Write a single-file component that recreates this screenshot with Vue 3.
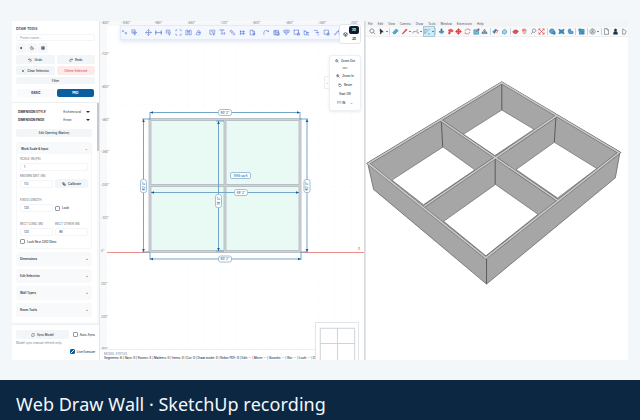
<script setup>
import { ref } from 'vue'

const project = ref('')
const tier = ref('pro')
const autoSync = ref(false)
const liveExecute = ref(true)
const lockLength = ref(false)
const lockRect = ref(false)

const sections = ['Dimensions', 'Edit Selection', 'Wall Types', 'Room Tools']

const glyphs = {
  back: 'M15 6v12l-8-6z',
  moon: 'M12 3a9 9 0 1 0 9 9a7 7 0 0 1-9-9z',
  grid: 'M4 4h16v16H4zM4 10h16M4 15h16M12 4v16',
  undo: 'M8 3L3 8l5 5M3 8h11a6 6 0 0 1 0 12h-4',
  redo: 'M16 3l5 5-5 5M21 8H10a6 6 0 0 0 0 12h4',
  close: 'M5 5l14 14M19 5L5 19',
  link: 'M4 4h8v8H4zM12 12h8v8h-8zM8 12v4h4',
  sync: 'M4 11a8 8 0 0 1 14-5l2 2V3M20 13a8 8 0 0 1-14 5l-2-2v5',
  zoom: 'M10 3a7 7 0 1 0 .1 0zM15 15l6 6M7 10h6',
  zoomIn: 'M10 3a7 7 0 1 0 .1 0zM15 15l6 6M7 10h6M10 7v6',
  reset: 'M5 4v6h6M5 10a8 8 0 1 1-1 6'
}

const tools = [
  [
    'M3 4l7 7M10 4l-7 7M13 14h8M17 10v9',
    'M3 3h11v11H3zM8 9l12 3-5 3-2 6z'
  ],
  [
    'M12 2v20M2 12h20M8 6l4-4 4 4M8 18l4 4 4-4M6 8l-4 4 4 4M18 8l4 4-4 4',
    'M2 12h20M6 8l-4 4 4 4M18 8l4 4-4 4M2 4v16M22 4v16',
    'M4 4h13v6M4 4v10h5M11 12l9 2-4 3-1 5zM8 8h5',
    'M3 8V3h5M16 3h5v5M21 16v5h-5M8 21H3v-5',
    'M3 4h7v16H3zM14 4h7v16h-7zM7 9h10',
    'M3 18L11 4l9 7-4 9H5zM9 12h8M14 9v8'
  ],
  [
    'M3 4h17v7M3 4v14h8M8 9h7M13 12l8 3-4 2-1 5z',
    'M3 6V3h14v3M10 3v14M6 17h8M15 14h7M18 11v9',
    'M3 7l4-4 14 14-4 4zM8 8l-3 3M12 12l-3 3',
    'M5 4v17M15 4v17M3 9h18M3 16h18',
    'M4 4h9l6 6v10H4zM13 4v6h6M13 14l8 3-5 4z'
  ],
  [
    'M3 20V12a8 8 0 0 1 15-3M14 9h5V4',
    'M3 5h16v15H3zM3 10h16M8 5v15M13 13h8v8h-8z',
    'M3 4h18v7H3zM6 11l5 9 7-9M8 7h9',
    'M4 4h15v14H4zM2 4h4M17 4h4M15 14h7v7h-7z',
    'M4 3v17h8M4 8h8v12M16 10v11h5M12 12h9',
    'M3 5h13M9 12h12M15 8v8M15 20h6',
    'M4 4h15v14H4zM14 14h7v7h-7z',
    'M3 20h5v-5h5V9h6V3M21 3v17'
  ]
]

const topLabels = [
  { x: 121, t: '-1080"' }, { x: 154, t: '-960"' }, { x: 187, t: '-840"' },
  { x: 220, t: '-720"' }, { x: 252, t: '-600"' }, { x: 285, t: '-480"' },
  { x: 318, t: '-360"' }, { x: 350, t: '-240"' }
]
const leftLabels = [
  { y: 24, t: '-840"' }, { y: 55, t: '-720"' }, { y: 88, t: '-600"' },
  { y: 121, t: '-480"' }, { y: 153, t: '-360"' }, { y: 186, t: '-240"' },
  { y: 219, t: '-120"' }, { y: 252, t: '0"' }, { y: 285, t: '120"' },
  { y: 318, t: '240"' }, { y: 350, t: '360"' }
]

const rooms = [
  { x: 150, y: 120 }, { x: 225, y: 120 }, { x: 150, y: 186 }, { x: 225, y: 186 }
]

const dims = [
  { d: 'M150 120v-8M300 120v-8M150 112.5H300', a: [[150, 112.5, 0], [300, 112.5, 180]], lx: 225, ly: 112.5, r: 0, t: `90' 2"` },
  { d: 'M150 252v8M301 252v8M150 259H301', a: [[150, 259, 0], [301, 259, 180]], lx: 225, ly: 259, r: 0, t: `90' 2"` },
  { d: 'M150 119h-8M150 252h-8M143.5 119V252', a: [[143.5, 119, 90], [143.5, 252, -90]], lx: 143.5, ly: 186, r: -90, t: `80' 0"` },
  { d: 'M300 119h8M300 252h8M307 119V252', a: [[307, 119, 90], [307, 252, -90]], lx: 307, ly: 186, r: -90, t: `80' 0"` },
  { d: 'M151 192.5H299', a: [[151, 192.5, 0], [299, 192.5, 180]], lx: 241, ly: 192.5, r: 0, t: `89' 2"` },
  { d: 'M216 121h8M216 251h8M218.5 121V251', a: [[218.5, 121, 90], [218.5, 251, -90]], lx: 218.5, ly: 201, r: -90, t: `79' 0"` }
]

const menus = ['File', 'Edit', 'View', 'Camera', 'Draw', 'Tools', 'Window', 'Extensions', 'Help']

const modelTools = [
  { c: '#44505a', d: 'M10 3a7 7 0 1 0 .1 0zM15 15l6 6' },
  { c: '#222', f: '#222', d: 'M7 3l11 10-6 1-3 7z', drop: true },
  { sep: true },
  { c: '#1c78a8', f: '#58a9cf', d: 'M3 15L14 4l7 5-10 11H6z' },
  { c: '#d83a30', f: '#e8564c', d: 'M4 20L18 3l3 3L7 20z', drop: true },
  { c: '#7a5a68', d: 'M3 18C6 2 12 22 20 4M16 14h5v6', drop: true },
  { c: '#2f86a8', d: 'M3 19L19 3M3 5h8M13 20h8M3 5v14', drop: true, on: true },
  { sep: true },
  { c: '#1f78b0', f: '#4f9bd0', d: 'M3 13l9 6 9-6-4-2h-3V3h-4v8H7z', e: 'M12 3v9' },
  { c: '#c92f3a', f: '#e06060', d: 'M4 8l8-4 8 3v6l-7-2-4 10-4-2 3-8z' },
  { c: '#e03434', f: '#e03434', d: 'M12 2l4 5h-3v4h4V8l5 4-5 4v-3h-4v4h3l-4 5-4-5h3v-4H7v3l-5-4 5-4v3h4V7H8z' },
  { c: '#dc3838', d: 'M4 11a8 8 0 0 1 14-5l2 2V3M20 13a8 8 0 0 1-14 5l-2-2v5' },
  { c: '#2a7fa9', f: '#7ec0dd', d: 'M3 6h16v15H3zM10 14L21 3', e: 'M9 14L21 3M15 3h6v6' },
  { c: '#35586c', f: '#d6e6ee', d: 'M3 19L12 4l9 15zM12 9v6M3 15h18' },
  { sep: true },
  { c: '#286f9c', f: '#3a86b5', d: 'M3 13l9-9 4 3-8 12z', e: 'M14 6l7 3-6 9' },
  { c: '#2d84b2', f: '#a8d2e6', d: 'M5 11l6-7 8 5v7l-6 5-8-3z' },
  { sep: true },
  { c: '#c8323c', f: '#e25a5f', d: 'M2 13l7-6h8l5 5-7 7H8z', e: 'M6 13h12' },
  { c: '#c86a5f', f: '#f3cfc5', d: 'M5 4l4 7V3h3v7l3-6 3 2-2 9-4 6-5-5z' },
  { c: '#4c5a64', d: 'M14 3a6 6 0 1 0 .1 0zM10 14l-7 7' },
  { c: '#cf3d3d', d: 'M3 3l18 18M21 3L3 21M3 9V3h6M15 3h6v6M21 15v6h-6M9 21H3v-6' },
  { sep: true },
  { c: '#17699c', f: '#5ea6cf', d: 'M10 3a8 8 0 1 0 .1 0zM14 13h7v8h-7z' },
  { c: '#17699c', f: '#3f8ebf', d: 'M3 4l9 4 9-4-3 8 3 8-9-3-9 3 3-8z' },
  { c: '#17699c', f: '#5ea6cf', d: 'M11 3a7 7 0 0 0-7 7l3 9h13v-7h-5z' },
  { sep: true },
  { c: '#17699c', f: '#5ea6cf', d: 'M3 3h8v8H3zM13 5h8v8h-8zM5 13h8v8H5zM15 15h6v6h-6z' },
  { sep: true },
  { c: '#4f5961', d: 'M12 3a9 9 0 1 0 .1 0zM9 10a3 3 0 1 0 6 0a3 3 0 1 0-6 0M6 18c3-5 9-5 12 0', drop: true },
  { sep: true },
  { c: '#5d666d', d: 'M5 2h9l5 5v15H5zM14 2v5h5' },
  { c: '#1b3448', f: '#1b3448', d: 'M12 3a4 4 0 1 0 .1 0zM5 21l2-8h10l2 8z' },
  { c: '#5d666d', d: 'M6 3l12 8-4 10H5z' }
]

const floors = [
  '424,106 521,164 403,243 308,179',
  '247,217 343,286 188,391 93,317',
  '582,203 710,282 592,371 467,285',
  '405,330 533,420 376,545 249,441'
]
const ridge = 'M424 24L777 234L376 551L22 267ZM241 137L592 378M588 124L190 396'
</script>

<template>
  <div class="page">
    <main class="stage">
      <div class="frame">
        <aside class="side">
          <header class="head">
            <h1>Draw Tools</h1>
            <input v-model="project" class="field" aria-label="Project name" placeholder="Project name..." />
            <div class="squares">
              <button v-for="g in ['back', 'moon', 'grid']" :key="g" class="square" :aria-label="g">
                <svg class="ic" :class="{ solid: g === 'back' }" viewBox="0 0 24 24"><path :d="glyphs[g]" /></svg>
              </button>
            </div>
            <div class="pair">
              <button class="btn"><svg class="ic" viewBox="0 0 24 24"><path :d="glyphs.undo" /></svg>Undo</button>
              <button class="btn"><svg class="ic" viewBox="0 0 24 24"><path :d="glyphs.redo" /></svg>Redo</button>
              <button class="btn"><svg class="ic" viewBox="0 0 24 24"><path :d="glyphs.close" /></svg>Clear Selection</button>
              <button class="btn danger">Delete Selected</button>
            </div>
            <button class="btn slim">Filter</button>
            <div class="tiers">
              <button class="tier" :class="{ active: tier === 'basic' }" @click="tier = 'basic'">BASIC</button>
              <button class="tier" :class="{ active: tier === 'pro' }" @click="tier = 'pro'">PRO</button>
            </div>
          </header>

          <div class="scroll">
            <div class="styles">
              <label for="dimStyle">DIMENSION STYLE</label>
              <span class="sel"><select id="dimStyle"><option>Architectural</option></select></span>
              <label for="dimEnds">DIMENSION ENDS</label>
              <span class="sel"><select id="dimEnds"><option>Arrow</option></select></span>
            </div>
            <button class="btn opening">Edit Opening (Native)</button>

            <section class="card">
              <button class="cardhead">Work Scale &amp; Input<span>–</span></button>
              <div class="form">
                <div class="cell wide">
                  <label for="scale">SCALE (IN/PX)</label>
                  <input id="scale" class="field" value="1" />
                </div>
                <div class="cell">
                  <label for="known">KNOWN DIST (IN)</label>
                  <input id="known" class="field" value="113" />
                </div>
                <button class="btn calib"><svg class="ic" viewBox="0 0 24 24"><path :d="glyphs.link" /></svg>Calibrate</button>
                <div class="cell space">
                  <label for="fixed">FIXED LENGTH</label>
                  <input id="fixed" class="field" value="120" />
                </div>
                <label class="check low"><input v-model="lockLength" type="checkbox" />Lock</label>
                <div class="cell space">
                  <label for="rectLong">RECT LONG (IN)</label>
                  <input id="rectLong" class="field" value="120" />
                </div>
                <div class="cell space">
                  <label for="rectOther">RECT OTHER (IN)</label>
                  <input id="rectOther" class="field" value="96" />
                </div>
                <label class="check wide"><input v-model="lockRect" type="checkbox" />Lock Rect CAD Dims</label>
              </div>
            </section>
            <button v-for="s in sections" :key="s" class="cardhead lone">{{ s }}<span>+</span></button>
          </div>

          <footer class="sync">
            <div class="syncrow">
              <button class="btn grow"><svg class="ic" viewBox="0 0 24 24"><path :d="glyphs.sync" /></svg>Sync Model</button>
              <label class="check"><input v-model="autoSync" type="checkbox" />Auto-Sync</label>
            </div>
            <p>Model sync manual refresh only.</p>
            <label class="check end"><input v-model="liveExecute" type="checkbox" />Live Execute</label>
          </footer>
        </aside>

        <section class="plan">
          <svg class="drawing" viewBox="99 21 265 339" preserveAspectRatio="xMidYMin meet">
            <defs>
              <pattern id="gridlines" width="16.4" height="16.4" patternUnits="userSpaceOnUse" x="105" y="22">
                <path d="M16.4 0H0V16.4" fill="none" stroke="#f6f8f9" stroke-width=".6" />
              </pattern>
            </defs>
            <rect x="99" y="21" width="266" height="339" fill="url(#gridlines)" />
            <rect x="99" y="21" width="266" height="5" fill="#f7f9fb" />
            <rect x="99" y="21" width="8" height="339" fill="#f8f9fb" />
            <path d="M99.500 21V360" stroke="#e3e7ea" />
            <g class="ruler">
              <text v-for="l in topLabels" :key="l.x" :x="l.x" y="24">{{ l.t }}</text>
              <text v-for="l in leftLabels" :key="l.y" x="101" :y="l.y">{{ l.t }}</text>
            </g>
            <path d="M107 252.500H365" stroke="#ef8d8d" />
            <text x="358" y="250" class="axis">x</text>
            <rect v-for="r in rooms" :key="r.x + '-' + r.y" :x="r.x" :y="r.y" width="75" height="66" fill="#e9faf5" />
            <path d="M150 119.500H300V251.500H150ZM225 119.500V251.500M150 185.500H300" class="wall" />
            <path d="M150 119.500H300V251.500H150ZM225 119.500V251.500M150 185.500H300" class="wallcore" />
            <g v-for="(m, i) in dims" :key="i" class="dim">
              <path :d="m.d" />
              <path v-for="(a, k) in m.a" :key="k" class="tip" d="M0 0l3-1.300v2.600z" :transform="`translate(${a[0]} ${a[1]}) rotate(${a[2]})`" />
              <g :transform="`translate(${m.lx} ${m.ly}) rotate(${m.r})`">
                <rect x="-6.500" y="-3" width="13" height="6" rx="2" />
                <text y="1.100">{{ m.t }}</text>
              </g>
            </g>
            <g class="dim" transform="translate(240.500 175.500)">
              <rect x="-10" y="-3" width="20" height="6" rx="1.500" />
              <text y="1.100">1885 sq ft</text>
            </g>
          </svg>

          <div class="toolbar">
            <div v-for="(group, gi) in tools" :key="gi" class="group">
              <button v-for="(d, i) in group" :key="i" class="tool" :aria-label="`Tool ${gi + 1}.${i + 1}`">
                <svg viewBox="0 0 24 24"><path :d="d" /></svg>
              </button>
            </div>
          </div>

          <div class="modes">
            <button class="gear" aria-label="View">
              <svg class="ic" viewBox="0 0 24 24"><path d="M12 3l8 4v9l-8 5-8-5V7zM4 7l8 5 8-5M12 12v9" /></svg>
            </button>
            <div class="stack">
              <button class="mode dark">2D</button>
              <button class="mode">3D</button>
            </div>
          </div>

          <button class="tab" aria-label="Collapse panel">‹</button>
          <div class="zoom">
            <button><svg class="ic" viewBox="0 0 24 24"><path :d="glyphs.zoom" /></svg>Zoom Out</button>
            <small>100%</small>
            <button><svg class="ic" viewBox="0 0 24 24"><path :d="glyphs.zoomIn" /></svg>Zoom In</button>
            <button><svg class="ic" viewBox="0 0 24 24"><path :d="glyphs.reset" /></svg>Reset</button>
            <button>Stair Off</button>
            <button>FT-IN<span class="caret">⌄</span></button>
          </div>

          <div class="status">
            <small>MODEL STATUS</small>
            <p>Segments: 6 | Rays: 0 | Rooms: 4 | Markers: 0 | Items: 0 | Cut: 0 | Draw mode: 0 | Robot PDF: 0 | Edit: -- | Move: -- | Bounds: -- | Rot: -- | Lock: -- | Off</p>
          </div>
          <svg class="mini" viewBox="0 0 44 40" preserveAspectRatio="xMidYMin slice">
            <path d="M4.500 5.500H40.500V42H4.500ZM22.500 5.500V42M4.500 21.500H40.500" />
          </svg>
        </section>

        <section class="model">
          <nav class="menus">
            <a v-for="m in menus" :key="m" href="#">{{ m }}</a>
          </nav>
          <div class="modelbar">
            <template v-for="(t, i) in modelTools" :key="i">
              <i v-if="t.sep" class="sep"></i>
              <button v-else class="mtool" :class="{ on: t.on, drop: t.drop }" :aria-label="`Model tool ${i + 1}`">
                <svg viewBox="0 0 24 24">
                  <path :d="t.d" :stroke="t.c" :fill="t.f || 'none'" />
                  <path v-if="t.e" :d="t.e" stroke="#db3440" fill="none" />
                </svg>
              </button>
            </template>
          </div>
          <svg class="walls" viewBox="15 -114 789 969" preserveAspectRatio="xMidYMin meet">
            <polygon points="424,22 780,232 766,310 378,630 38,345 20,266" fill="#a6a6a6" stroke="#555" stroke-width="2" />
            <polygon v-for="f in floors" :key="f" :points="f" fill="#fff" stroke="#666" stroke-width="2" />
            <path d="M424 28V106M242 140L246 217M587 127L582 203M404 250V330M378 553V630" stroke="#5a5a5a" stroke-width="3" />
            <path :d="ridge" fill="none" stroke="#666" stroke-width="8" stroke-linejoin="miter" />
            <path :d="ridge" fill="none" stroke="#c9c9c9" stroke-width="5" stroke-linejoin="miter" />
          </svg>
        </section>
      </div>
    </main>
    <footer class="caption">Web Draw Wall · SketchUp recording</footer>
  </div>
</template>

<style>
body {
  margin: 0;
  background: #f3f7fa;
}
</style>

<style scoped>
* {
  box-sizing: border-box;
}
.page {
  display: flex;
  flex-direction: column;
  min-height: 100vh;
  font-family: Inter, "Liberation Sans", sans-serif;
  font-size: 3px;
  line-height: 4px;
  color: #29333d;
}
button,
input,
select {
  font: inherit;
  color: inherit;
  border: 0;
  margin: 0;
  padding: 0;
  background: none;
}
h1,
p {
  margin: 0;
}
.stage {
  flex: 1;
  display: flex;
  padding: 21px 12px 20px;
}
.frame {
  flex: 1;
  display: grid;
  grid-template-columns: 87px minmax(0, 266fr) minmax(0, 263fr);
  background: #fff;
  overflow: hidden;
}
.caption {
  padding: 8px 16px 0;
  background: #0b2742;
  color: #f4f8fb;
  font-family: "Noto Sans", sans-serif;
  font-size: 18px;
  line-height: 32px;
  font-kerning: none;
}

.side {
  display: flex;
  flex-direction: column;
  background: #fff;
}
.head {
  display: flex;
  flex-direction: column;
  gap: 2px;
  padding: 4px 4px 5px;
  border-bottom: 1px solid #edf0f3;
}
h1 {
  font-size: 4px;
  line-height: 7px;
  font-weight: 500;
}
.field {
  display: block;
  width: 100%;
  height: 7px;
  padding: 0 3px;
  border: 1px solid #f3f5f7;
  border-radius: 2px;
  background: #fff;
}
.field::placeholder {
  color: #8d969e;
}
.ic {
  width: 4px;
  height: 4px;
  flex: none;
  fill: none;
  stroke: currentColor;
  stroke-width: 3;
}
.ic.solid {
  fill: currentColor;
}
.squares {
  display: flex;
  gap: 1px;
}
.square {
  display: grid;
  place-items: center;
  width: 10px;
  height: 10px;
  border-radius: 2px;
  background: #f5f7f9;
}
.pair {
  display: grid;
  grid-template-columns: 1fr 1fr;
  gap: 2px;
}
.btn {
  display: flex;
  align-items: center;
  justify-content: center;
  gap: 2px;
  height: 9px;
  border-radius: 2px;
  background: #f3f6f8;
  font-weight: 500;
  white-space: nowrap;
}
.danger {
  background: #fdebec;
  color: #e0525c;
}
.slim {
  height: 7px;
}
.tiers {
  display: grid;
  grid-template-columns: 1fr 1fr;
  gap: 2px;
  padding: 3px 1px 0;
}
.tier {
  height: 8px;
  border-radius: 2px;
  background: #f8fafb;
  font-weight: 700;
}
.tier.active {
  background: #075f9f;
  color: #fff;
}
.scroll {
  flex: 1;
  display: flex;
  flex-direction: column;
  gap: 3px;
  padding: 5px 5px 3px 4px;
  border-right: 2px solid;
  border-image: linear-gradient(#c3c9ce 22%, #f7f8f9 22%) 1;
}
.styles {
  display: grid;
  grid-template-columns: 45px 1fr;
  align-items: center;
  row-gap: 1px;
  padding: 0 2px;
  font-weight: 700;
}
.sel {
  display: flex;
  align-items: center;
  height: 7px;
  font-weight: 400;
}
.sel select {
  appearance: none;
  width: 100%;
}
.sel::after {
  content: "";
  border: 2px solid transparent;
  border-top-color: #28323b;
  border-bottom: 0;
  flex: none;
}
.opening {
  flex: none;
  height: 8px;
  margin: 3px 0 2px;
}
.card {
  border: 1px solid #f4f6f7;
  border-radius: 3px;
}
.cardhead {
  display: flex;
  align-items: center;
  justify-content: space-between;
  width: 100%;
  height: 11px;
  padding: 0 4px;
  background: #f7f9fa;
  font-weight: 600;
}
.lone {
  height: 14px;
  border-radius: 3px;
}
.form {
  display: grid;
  grid-template-columns: 1fr 1fr;
  gap: 3px 2px;
  padding: 3px 3px 4px;
}
.cell label {
  display: block;
  line-height: 4px;
  margin-bottom: 2px;
  color: #59636d;
  white-space: nowrap;
}
.cell .field {
  height: 8px;
}
.space {
  padding-top: 7px;
}
.wide {
  grid-column: 1 / -1;
}
.calib {
  align-self: end;
}
.check {
  display: flex;
  align-items: center;
  gap: 2px;
  font-weight: 500;
  white-space: nowrap;
}
.low {
  align-self: end;
  height: 8px;
}
.check input {
  appearance: none;
  width: 5px;
  height: 5px;
  border: 1px solid #929ca5;
  border-radius: 1px;
  background: #fff;
}
.check input:checked {
  border-color: #075f9f;
  background: linear-gradient(135deg, #075f9f 40%, #fff 40%, #fff 60%, #075f9f 60%);
}
.sync {
  padding: 5px 4px 6px;
  border-top: 1px solid #edf0f3;
  box-shadow: 0 -1px 2px #f0f3f5;
}
.syncrow {
  display: flex;
  gap: 4px;
}
.grow {
  flex: 1;
}
.sync p {
  margin: 2px 0 4px;
  color: #78838d;
}
.end {
  justify-content: flex-end;
}

.plan {
  position: relative;
  overflow: hidden;
  border-right: 1px solid #d6dadd;
}
.drawing {
  position: absolute;
  inset: 0;
  width: 100%;
  height: 100%;
}
.ruler text {
  font-size: 3px;
  font-style: italic;
  fill: #6d757c;
}
.axis {
  font-size: 4px;
  fill: #e05555;
}
.wall {
  fill: none;
  stroke: #b9c1c6;
  stroke-width: 3;
}
.wallcore {
  fill: none;
  stroke: #cdd2d6;
  stroke-width: 1;
}
.dim path {
  fill: none;
  stroke: #74a6c9;
  stroke-width: 1;
}
.dim .tip {
  fill: #0f5f98;
  stroke: none;
}
.dim rect {
  fill: #fff;
  stroke: #9fc1d8;
  stroke-width: 1;
}
.dim text {
  font-size: 3px;
  font-weight: 500;
  fill: #155a8c;
  text-anchor: middle;
}
.toolbar {
  position: absolute;
  top: 4px;
  left: 21px;
  right: 17px;
  display: flex;
  align-items: center;
  gap: 7px;
  height: 15px;
  overflow: hidden;
  background: #f4f8fe;
  border: 1px solid #e2ecf9;
  box-shadow: 0 2px 4px #e1e8f5;
}
.group {
  display: flex;
  gap: 3px;
}
.tool {
  width: 7px;
  height: 8px;
}
.tool svg {
  display: block;
  width: 7px;
  height: 7px;
  fill: none;
  stroke: #5474d4;
  stroke-width: 2;
}
.modes {
  position: absolute;
  top: 3px;
  right: 3px;
  display: flex;
  align-items: center;
  width: 22px;
  height: 20px;
  padding: 1px;
  border: 1px solid #e2e6ea;
  border-radius: 3px;
  background: #fff;
}
.gear {
  display: grid;
  place-items: center;
  width: 8px;
}
.gear .ic {
  width: 5px;
  height: 5px;
}
.stack {
  flex: 1;
  display: grid;
  gap: 1px;
}
.mode {
  height: 8px;
  border-radius: 2px;
  font-weight: 700;
}
.dark {
  background: #0c1c2c;
  color: #fff;
}
.zoom {
  position: absolute;
  top: 34px;
  right: 3px;
  display: flex;
  flex-direction: column;
  width: 32px;
  padding-bottom: 3px;
  border: 1px solid #eef1f3;
  border-radius: 3px;
  background: #fff;
  box-shadow: 0 1px 3px #e6eaee;
}
.zoom button {
  display: flex;
  align-items: center;
  justify-content: center;
  gap: 2px;
  height: 9px;
  font-weight: 500;
}
.zoom small {
  font-size: 2px;
  line-height: 6px;
  text-align: center;
}
.caret {
  margin-left: 3px;
}
.tab {
  position: absolute;
  top: 55px;
  right: 34px;
  width: 6px;
  height: 13px;
  border: 1px solid #e9edf0;
  border-radius: 2px 0 0 2px;
  background: #fff;
}
.status {
  position: absolute;
  left: 1px;
  right: 48px;
  bottom: 0;
  padding: 2px 0 0 4px;
  overflow: hidden;
  border-top: 1px solid #edf0f2;
  background: #fff;
  white-space: nowrap;
}
.status small {
  display: block;
  font-size: 3px;
  line-height: 4px;
  color: #77818a;
}
.status p {
  line-height: 4px;
  font-weight: 500;
}
.mini {
  position: absolute;
  right: 5px;
  bottom: 0;
  width: 44px;
  height: 38px;
  border: 1px solid #e2e5e8;
  border-bottom: 0;
  background: #fff;
}
.mini path {
  fill: none;
  stroke: #cbd2d5;
  stroke-width: 1;
}

.model {
  display: flex;
  flex-direction: column;
  min-width: 0;
  border-left: 1px solid #e3e5e8;
}
.menus {
  display: flex;
  gap: 5px;
  height: 6px;
  padding: 0 2px;
  background: #f3f4f6;
  font-family: "Noto Sans", sans-serif;
  line-height: 6px;
}
.menus a {
  color: #4c5359;
  text-decoration: none;
}
.modelbar {
  display: flex;
  align-items: center;
  justify-content: space-between;
  height: 10px;
  padding: 0 0 0 3px;
  background: #f8f9fa;
  border-bottom: 1px solid #eceef0;
}
.mtool {
  display: flex;
  align-items: center;
  height: 9px;
}
.mtool svg {
  width: 7px;
  height: 7px;
  stroke-width: 2;
}
.mtool.drop::after {
  content: "";
  width: 2px;
  height: 1px;
  margin-left: 1px;
  background: #7a8288;
}
.mtool.on {
  background: #d5ebf4;
  outline: 1px solid #9fcbdc;
}
.sep {
  width: 1px;
  height: 7px;
  background: #cfd4d8;
}
.walls {
  flex: 1;
  width: 100%;
  min-height: 0;
}
</style>
